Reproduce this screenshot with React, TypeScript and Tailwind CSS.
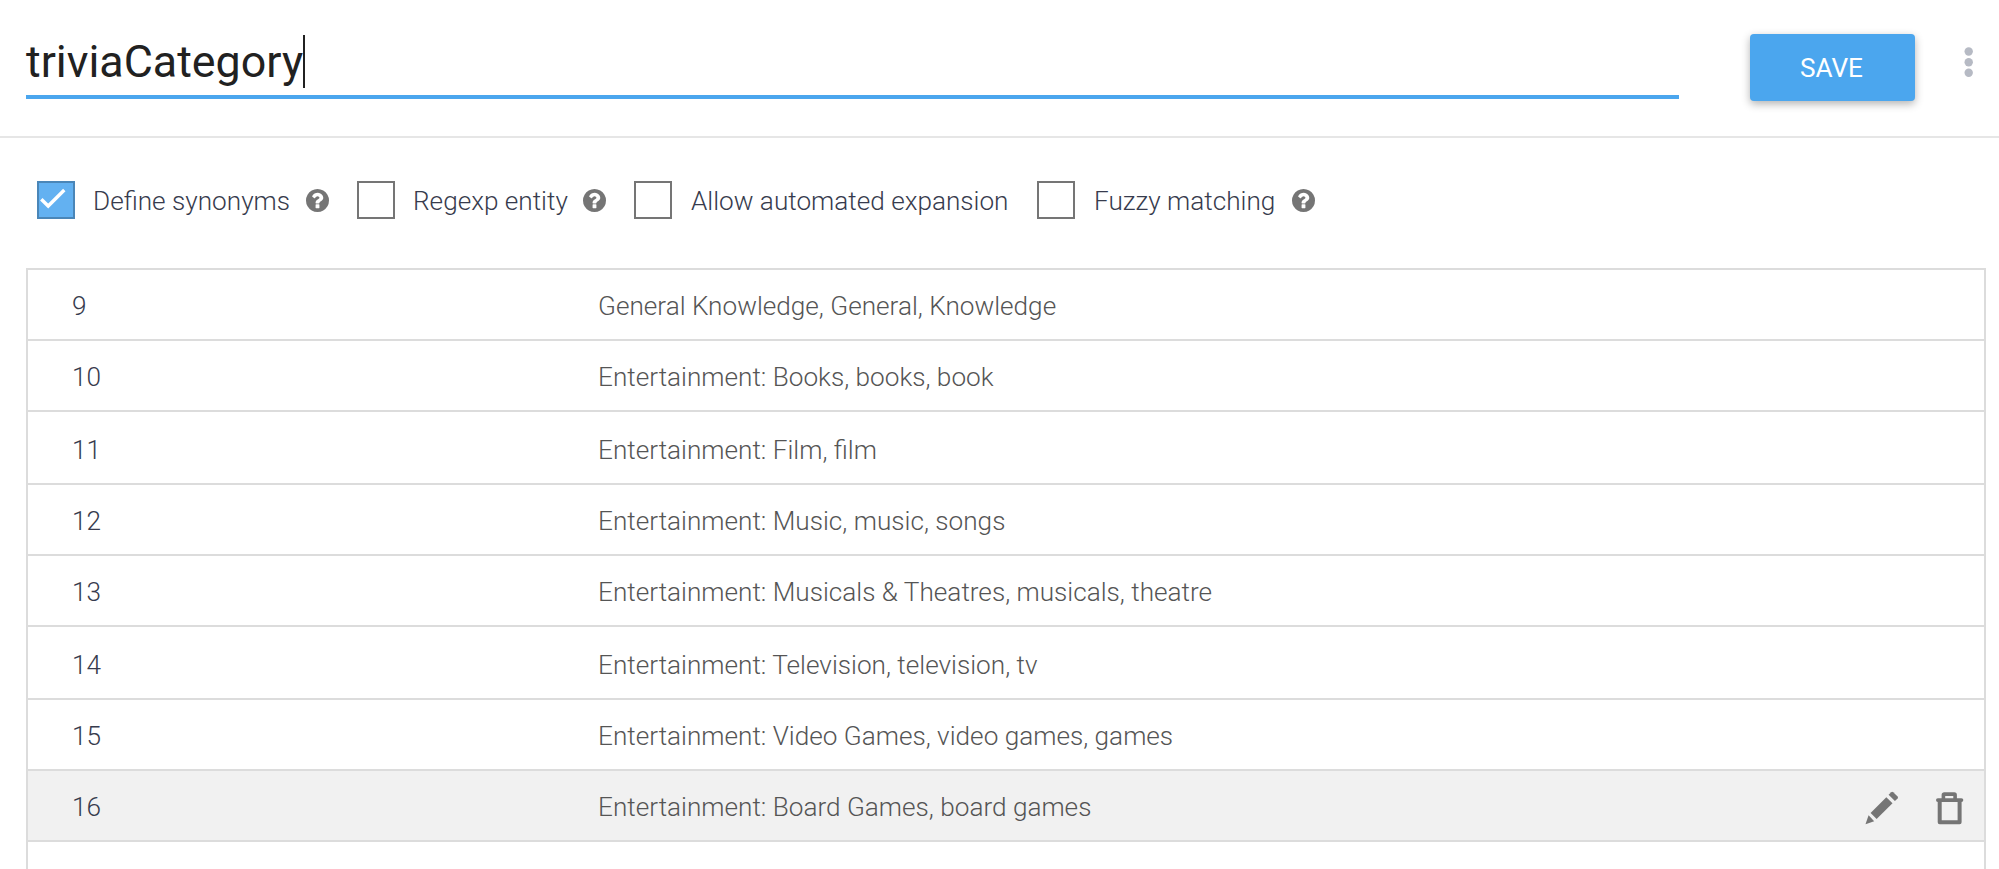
type Entry = { value: string; synonyms: string; tall?: boolean; hovered?: boolean };

const entries: Entry[] = [
  { value: "9", synonyms: "General Knowledge, General, Knowledge" },
  { value: "10", synonyms: "Entertainment: Books, books, book" },
  { value: "11", synonyms: "Entertainment: Film, film", tall: true },
  { value: "12", synonyms: "Entertainment: Music, music, songs" },
  { value: "13", synonyms: "Entertainment: Musicals & Theatres, musicals, theatre" },
  { value: "14", synonyms: "Entertainment: Television, television, tv", tall: true },
  { value: "15", synonyms: "Entertainment: Video Games, video games, games" },
  { value: "16", synonyms: "Entertainment: Board Games, board games", hovered: true },
];

function HelpIcon() {
  return (
    <svg viewBox="128 128 1536 1536" className="h-[23px] w-[23px] shrink-0 fill-[#757575]">
      <path d="M1024 1376v-192q0-14-9-23t-23-9h-192q-14 0-23 9t-9 23v192q0 14 9 23t23 9h192q14 0 23-9t9-23zm256-672q0-88-55.500-163t-138.500-116-170-41q-243 0-371 213-15 24 8 42l132 100q7 6 19 6 16 0 25-12 53-68 86-92 34-24 86-24 48 0 85.500 26t37.500 59q0 38-20 61t-68 45q-63 28-115.500 86.500t-52.500 125.500v36q0 14 9 23t23 9h192q14 0 23-9t9-23q0-19 21.500-49.500t54.500-49.500q32-18 49-28.500t46-35 44.500-48 28-60.500 12.500-81zm384 192q0 209-103 385.500t-279.500 279.500-385.500 103-385.500-103-279.500-279.500-103-385.500 103-385.500 279.500-279.500 385.500-103 385.500 103 279.500 279.500 103 385.500z" />
    </svg>
  );
}

type OptionProps = { label: string; checked?: boolean; help?: boolean; className: string };

function Option({ label, checked, help, className }: OptionProps) {
  return (
    <div className={`flex shrink-0 items-center ${className}`}>
      <span
        className={
          checked
            ? "h-[38px] w-[38px] shrink-0 border-2 border-[#4a86b8] bg-[#63b1f1]"
            : "h-[38px] w-[38px] shrink-0 border-2 border-[#757575] bg-white"
        }
      >
        {checked && (
          <svg viewBox="0 0 34 34" className="h-[34px] w-[34px]" fill="none" stroke="#fff" strokeWidth="3.4">
            <path d="M2.300 16.200 9.200 23 25.300 7" />
          </svg>
        )}
      </span>
      <span className="pt-[2px] text-[26.16px] leading-8 whitespace-nowrap text-[#373b4d]">{label}</span>
      {help && (
        <span className="-ml-[2.5px] pt-px">
          <HelpIcon />
        </span>
      )}
    </div>
  );
}

function PencilIcon() {
  return (
    <svg viewBox="0 0 34 34" className="h-[34px] w-[34px] fill-[#757575]">
      <path d="M.5 33.300 3.600 24.300 9.200 30.200z" />
      <path d="M5.600 22 21.300 6.300 27.500 12.200 11.600 28.100z" />
      <path d="M23.600 3.800 26.200 1.200q1-.9 2 0l4.400 4.300q.8 1 0 2L29.900 10.100z" />
    </svg>
  );
}

function TrashIcon() {
  return (
    <svg viewBox="0 0 28 34" className="h-[34px] w-[28px]" fill="none" stroke="#757575" strokeLinejoin="round" strokeLinecap="round">
      <path strokeWidth="3.800" d="M1.900 9.100H25.400" />
      <path strokeWidth="3.600" d="M7.400 8.500V3.900q0-.8.8-.8H18.300q.8 0 .8.8V8.500" />
      <path strokeWidth="4" d="M3.700 10V31.300H23.600V10" />
    </svg>
  );
}

export default function App() {
  return (
    <div className="flex h-[869px] w-full flex-col overflow-hidden bg-white font-['Roboto',sans-serif] font-light">
      <header className="flex h-[138px] shrink-0 items-start border-b-2 border-[#e6e6e6]">
        <div className="ml-[26px] flex h-[99px] w-[1653px] shrink-0 items-start border-b-4 border-[#4ba6ee]">
          <h1 className="mt-[35px] text-[44.8px] leading-[54px] font-normal text-[#212121]">triviaCategory</h1>
          <span className="mt-[35px] h-[53px] w-[2px] bg-[#212121]" />
        </div>
        <button className="mt-[34px] ml-[71px] h-[67px] w-[165px] shrink-0 rounded-[4px] bg-[#4ba6ee] pt-[2px] pr-[2px] text-[26.16px] font-normal text-white shadow-[0_3px_8px_rgba(0,0,0,0.3)]">
          SAVE
        </button>
        <svg viewBox="0 0 10 32" className="mt-[47px] ml-[49px] h-8 w-[10px] fill-[#b6bac4]">
          <circle cx="4.700" cy="4.500" r="4.200" />
          <circle cx="4.700" cy="15.200" r="4.200" />
          <circle cx="4.700" cy="25.800" r="4.200" />
        </svg>
      </header>

      <div className="mt-[43px] ml-[37px] flex h-[38px] shrink-0">
        <Option label="Define synonyms" checked help className="mr-[29px] w-[291px] gap-[18px]" />
        <Option label="Regexp entity" help className="mr-[27px] w-[250px] gap-[18px]" />
        <Option label="Allow automated expansion" className="w-[403px] gap-[19px]" />
        <Option label="Fuzzy matching" help className="w-[277px] gap-[19px]" />
      </div>

      <div className="mt-[49px] mr-[13px] ml-[26px] flex-1 border-x-2 border-t-2 border-[#dcdcdc]">
        {entries.map((e) => (
          <div
            key={e.value}
            className={`flex items-center border-b-2 border-[#dcdcdc] pl-[44px] text-[26.16px] leading-8 ${e.tall ? "h-[73px] pt-[4px]" : "h-[71px] pt-[2px]"} ${e.hovered ? "bg-[#f1f1f1]" : "bg-white"}`}
          >
            <span className="w-[526px] shrink-0 text-[#373b4d]">{e.value}</span>
            <span className="text-[#555]">{e.synonyms}</span>
            {e.hovered && (
              <span className="mr-[20px] ml-auto flex items-center gap-[37px] pt-[2px]">
                <PencilIcon />
                <TrashIcon />
              </span>
            )}
          </div>
        ))}
      </div>
    </div>
  );
}
